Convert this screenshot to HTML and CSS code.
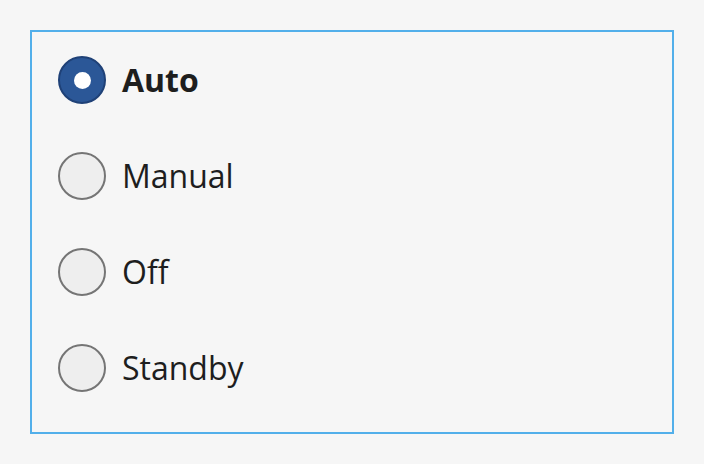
FILE: index.html
```html
<!DOCTYPE html>
<html lang="en">
<head>
    <meta charset="UTF-8">
    <meta name="viewport" content="width=device-width, initial-scale=1.0">
    <title>Mode</title>
    <link rel="stylesheet" href="styles.css">
</head>
<body>
    <div class="group" role="radiogroup">
        <label class="option checked">
            <input type="radio" name="mode" value="auto" checked>
            <span class="option-label">Auto</span>
        </label>
        <label class="option">
            <input type="radio" name="mode" value="manual">
            <span class="option-label">Manual</span>
        </label>
        <label class="option">
            <input type="radio" name="mode" value="off">
            <span class="option-label">Off</span>
        </label>
        <label class="option">
            <input type="radio" name="mode" value="standby">
            <span class="option-label">Standby</span>
        </label>
    </div>

    <script>
        document.querySelectorAll('.option input').forEach(input => {
            input.addEventListener('change', () => {
                document.querySelectorAll('.option').forEach(opt => {
                    opt.classList.toggle('checked', opt.querySelector('input').checked);
                });
            });
        });
    </script>
</body>
</html>
```

FILE: styles.css
```css
body {
    font-family: 'Open Sans', 'Noto Sans', sans-serif;
    background-color: #f6f6f6;
    color: #1e1e1e;
    margin: 0;
    padding: 30px;
}
.group {
    width: 644px;
    box-sizing: border-box;
    border: 2px solid #52afea;
    padding: 24px 26px 40px;
    display: flex;
    flex-direction: column;
    gap: 48px;
}
.option {
    display: flex;
    align-items: center;
    gap: 16px;
    height: 48px;
    cursor: pointer;
}
.option input {
    appearance: none;
    -webkit-appearance: none;
    width: 48px;
    height: 48px;
    margin: 0;
    box-sizing: border-box;
    border: 2px solid #757575;
    border-radius: 50%;
    background-color: #eeeeee;
    flex-shrink: 0;
    display: flex;
    align-items: center;
    justify-content: center;
    cursor: pointer;
}
.option input:checked {
    background-color: #2b5797;
    border-color: #1f4177;
}
.option input:checked::after {
    content: '';
    width: 17px;
    height: 17px;
    border-radius: 50%;
    background-color: #ffffff;
}
.option-label {
    font-size: 32px;
    line-height: 1;
}
.option.checked .option-label {
    font-weight: 700;
}
```
